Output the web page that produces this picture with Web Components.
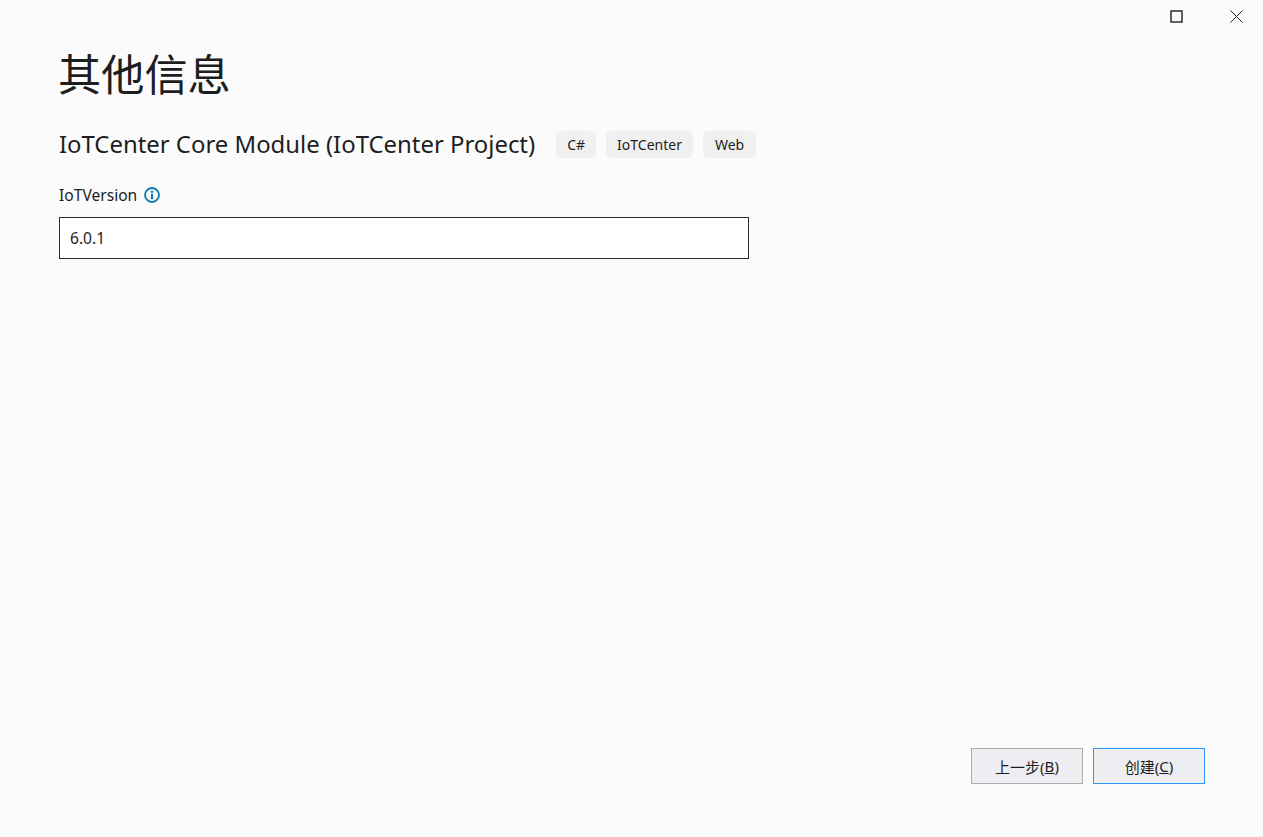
<!DOCTYPE html>
<html lang="zh-CN">
<head>
<meta charset="utf-8">
<title>其他信息</title>
<style>
  html, body { margin: 0; height: 100%; }
  body {
    background: #fbfbfb;
    color: #1e1e1e;
    font-family: "Noto Sans", "Noto Sans CJK SC", sans-serif;
  }
</style>
</head>
<body>
<app-dialog>
  <info-tag slot="tags">C#</info-tag>
  <info-tag slot="tags">IoTCenter</info-tag>
  <info-tag slot="tags" style="padding: 0 12px">Web</info-tag>
  <dialog-button slot="buttons">上一步(<u>B</u>)</dialog-button>
  <dialog-button slot="buttons" primary>创建(<u>C</u>)</dialog-button>
</app-dialog>
<script>
class windowControls extends HTMLElement {
  constructor() {
    super();
    this.shadow = this.attachShadow({ mode: 'open' });
  }

  connectedCallback() {
    this.shadow.innerHTML = `
      <style>
        :host {
          display: flex;
          justify-content: flex-end;
          gap: 6px;
          height: 32px;
        }
        .control {
          display: flex;
          align-items: center;
          justify-content: center;
          width: 54px;
          height: 32px;
        }
        svg { display: block; }
      </style>
      <div class="control">
        <svg width="13" height="13" viewBox="0 0 13 13"><rect x="1" y="1" width="11" height="11" fill="none" stroke="#1e1e1e" stroke-width="1.4"/></svg>
      </div>
      <div class="control">
        <svg width="13" height="13" viewBox="0 0 13 13"><path d="M.5.5l12 12M12.500.5l-12 12" fill="none" stroke="#1e1e1e" stroke-width="1"/></svg>
      </div>
    `;
  }
}

class infoTag extends HTMLElement {
  constructor() {
    super();
    this.shadow = this.attachShadow({ mode: 'open' });
  }

  connectedCallback() {
    this.shadow.innerHTML = `
      <style>
        :host {
          display: flex;
          align-items: center;
          box-sizing: border-box;
          height: 27px;
          padding: 0 11px;
          border-radius: 5px;
          background: #f0f0f0;
          font-size: 14px;
          color: #1e1e1e;
        }
      </style>
      <slot></slot>
    `;
  }
}

class dialogButton extends HTMLElement {
  constructor() {
    super();
    this.shadow = this.attachShadow({ mode: 'open' });
  }

  connectedCallback() {
    this.shadow.innerHTML = `
      <style>
        :host {
          display: flex;
          align-items: center;
          justify-content: center;
          box-sizing: border-box;
          width: 112px;
          height: 36px;
          border: 1px solid #adadad;
          background: #eeeef2;
          font-size: 15px;
          color: #1e1e1e;
        }
        :host([primary]) { border-color: #3399ff; }
      </style>
      <slot></slot>
    `;
  }
}

class appDialog extends HTMLElement {
  constructor() {
    super();
    this.shadow = this.attachShadow({ mode: 'open' });
  }

  connectedCallback() {
    this.shadow.innerHTML = `
      <style>
        :host {
          display: flex;
          flex-direction: column;
          height: 837px;
          box-sizing: border-box;
          overflow: hidden;
        }
        .content {
          display: flex;
          flex-direction: column;
          flex: 1;
          padding: 0 58px 53px 59px;
        }
        h1 {
          margin: 9px 0 0 -1px;
          height: 62px;
          font-size: 43.2px;
          line-height: 62px;
          font-weight: 400;
          font-family: "Noto Sans CJK SC", sans-serif;
        }
        .title-row {
          display: flex;
          align-items: center;
          margin-top: 27px;
          height: 28px;
        }
        h2 {
          margin: -1px 21px 0 0;
          font-size: 23.9px;
          font-weight: 400;
          white-space: nowrap;
        }
        .tags { display: flex; gap: 10px; }
        .field-label {
          display: flex;
          align-items: center;
          gap: 7px;
          margin-top: 25px;
          height: 24px;
          font-size: 15.6px;
        }
        svg { display: block; }
        .field {
          display: flex;
          align-items: center;
          box-sizing: border-box;
          width: 690px;
          height: 42px;
          margin-top: 10px;
          padding-left: 10px;
          border: 1px solid #2b2b2b;
          background: #fff;
          font-size: 15.6px;
        }
        .buttons {
          display: flex;
          justify-content: flex-end;
          gap: 10px;
          margin-top: auto;
        }
      </style>
      <window-controls></window-controls>
      <div class="content">
        <h1>其他信息</h1>
        <div class="title-row">
          <h2>IoTCenter Core Module (IoTCenter Project)</h2>
          <div class="tags"><slot name="tags"></slot></div>
        </div>
        <div class="field-label">
          <span>IoTVersion</span>
          <svg width="16" height="16" viewBox="0 0 16 16">
            <circle cx="8" cy="8" r="7" fill="none" stroke="#0e7bab" stroke-width="1.8"/>
            <rect x="6.900" y="6.800" width="2.200" height="5.400" fill="#0e7bab"/>
            <rect x="6.900" y="3.600" width="2.200" height="2.200" fill="#0e7bab"/>
          </svg>
        </div>
        <div class="field">6.0.1</div>
        <div class="buttons"><slot name="buttons"></slot></div>
      </div>
    `;
  }
}

customElements.define('window-controls', windowControls);
customElements.define('info-tag', infoTag);
customElements.define('dialog-button', dialogButton);
customElements.define('app-dialog', appDialog);
</script>
</body>
</html>
